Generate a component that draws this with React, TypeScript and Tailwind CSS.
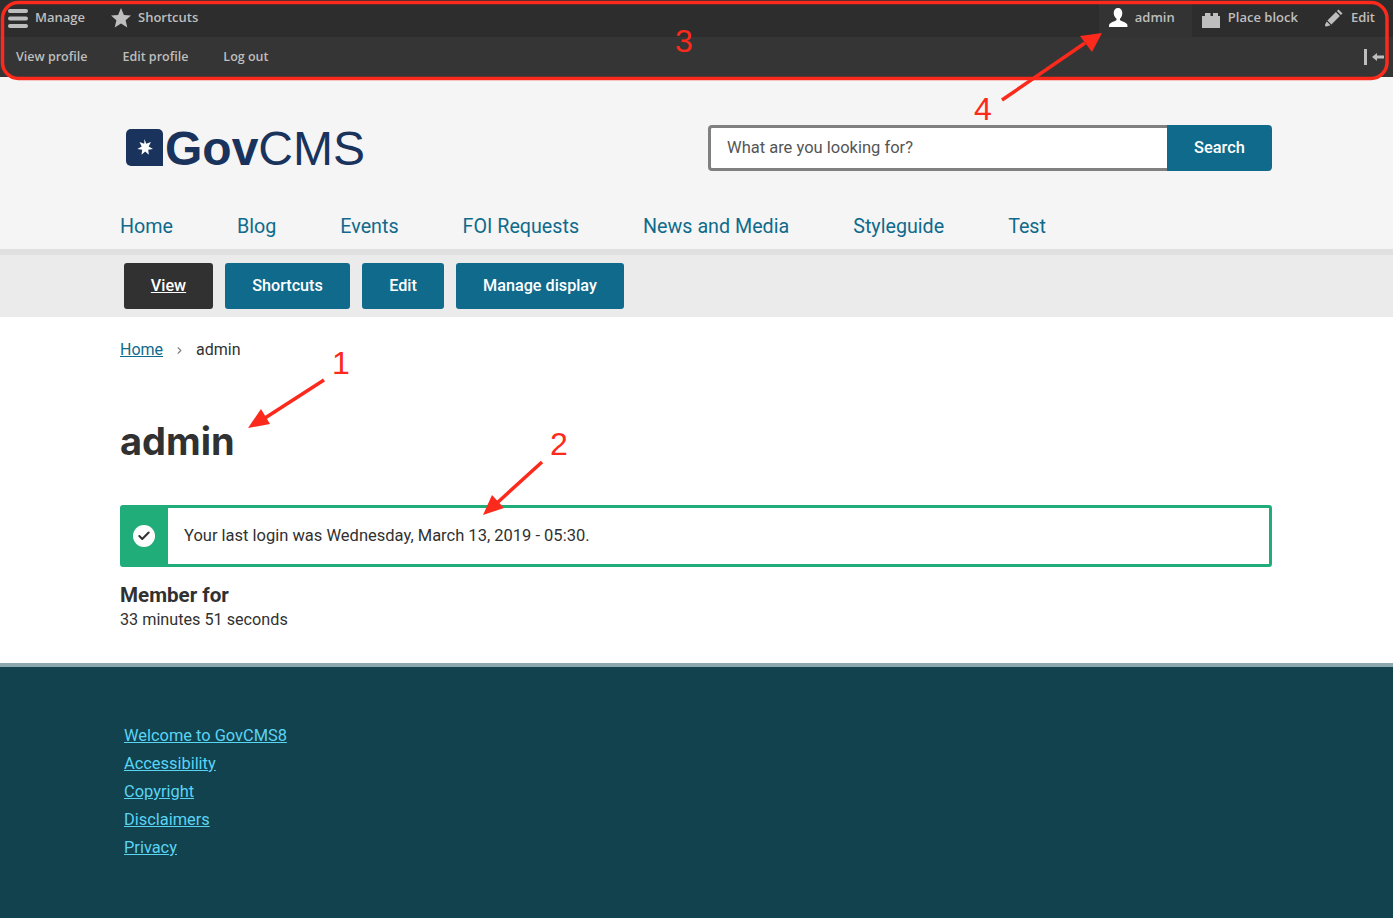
import React from 'react';
import { Check, ChevronRight } from 'lucide-react';

const mainLinks = ['Home', 'Blog', 'Events', 'FOI Requests', 'News and Media', 'Styleguide', 'Test'];
const footerLinks = ['Welcome to GovCMS8', 'Accessibility', 'Copyright', 'Disclaimers', 'Privacy'];
const sans = "font-['Roboto','Inter',sans-serif]";

const BurgerIcon = () => (
    <svg width="20" height="19" viewBox="0 0 20 19" fill="#bebebe">
        <rect x="0" y="0" width="20" height="4" rx="2" />
        <rect x="0" y="7.500" width="20" height="4" rx="2" />
        <rect x="0" y="15" width="20" height="4" rx="2" />
    </svg>
);

const StarIcon = () => (
    <svg width="20" height="20" viewBox="0 0 20 20" fill="#bebebe" className="-translate-y-px">
        <path d="M10 0l2.900 6.900 7.100.6-5.400 4.700 1.700 7.300L10 15.600 3.700 19.500l1.700-7.300L0 7.500l7.100-.6z" />
    </svg>
);

const UserIcon = () => (
    <svg width="20" height="20" viewBox="0 0 20 20" fill="#ffffff">
        <path d="M10 0c2.700 0 4.300 2.100 4.300 4.900 0 2.300-.9 4.400-2.100 5.500-.5.5-.4 1.600.3 2 1.800.9 5.500 2 6.500 3.500.4.600.5 2.100.5 3.100H1c0-1 .1-2.500.5-3.100 1-1.500 4.700-2.600 6.500-3.500.7-.4.800-1.500.3-2C7 9.300 5.700 7.200 5.700 4.900 5.700 2.100 7.300 0 10 0z" />
    </svg>
);

const BlockIcon = () => (
    <svg width="18" height="15" viewBox="0 0 18 15" fill="#bebebe" className="translate-y-[2px]">
        <path d="M0 3h3V0h5.500v3H11V0h5v3h2v12H0z" />
    </svg>
);

const PencilIcon = () => (
    <svg width="18" height="18" viewBox="0 0 18 18" fill="#bebebe">
        <path d="M13.500 0.500l4 4-1.600 1.600-4-4zM10.900 3.100l4 4-8.500 8.500-4-4zM1.700 12.500l3.800 3.800-3.200 1-1.600.200-.700-.700.200-1.600z" />
    </svg>
);

const CollapseIcon = () => (
    <svg width="20" height="16" viewBox="0 0 20 16" fill="#bebebe">
        <rect x="0" y="0" width="3" height="16" />
        <path d="M8 8l5-4v2.500h7v3h-7V12z" />
    </svg>
);

const StarLogo = () => (
    <svg width="37" height="37" viewBox="0 0 37 37">
        <path d="M0 5a5 5 0 0 1 5-5h27a5 5 0 0 1 5 5v32H5a5 5 0 0 1-5-5z" fill="#1a335c" />
        <path d="M18.500 10l1.700 4.700 4.700-1.800-2.200 4.600 4.300 2.500-4.800.8.700 5-3.700-3.300-3.700 3.300.7-5-4.800-.8 4.300-2.500-2.200-4.600 4.700 1.800z" fill="#ffffff" />
    </svg>
);

const Annotations = () => (
    <svg className="absolute left-0 top-0 pointer-events-none" width="1393" height="918" viewBox="0 0 1393 918" fill="none">
        <rect x="2.500" y="2.500" width="1384.500" height="76" rx="16" stroke="#fc2a1c" strokeWidth="3.500" />
        <path d="M1002 100L1085 43" stroke="#fc2a1c" strokeWidth="3.500" />
        <path d="M1102 33L1092 52L1080 36z" fill="#fc2a1c" />
        <path d="M324 380L265 418" stroke="#fc2a1c" strokeWidth="3.500" />
        <path d="M248 428L261 409L270 424z" fill="#fc2a1c" />
        <path d="M542 462L497 503" stroke="#fc2a1c" strokeWidth="3.500" />
        <path d="M483 515L492 495L504 508z" fill="#fc2a1c" />
    </svg>
);

const AnnotationLabel = ({ children, className }: { children: React.ReactNode; className: string }) => (
    <span className={`absolute font-['Liberation_Sans',sans-serif] text-[32px] leading-none text-[#fc2a1c] ${className}`}>{children}</span>
);

const App = () => {
    return (
        <div className={`relative min-h-[918px] overflow-hidden bg-white text-[#313131] ${sans}`}>
            {/* Admin toolbar */}
            <div className="bg-[#353535] font-['Open_Sans',sans-serif] text-[13px] font-semibold text-[#bebebe]">
                <div className="flex h-[37px] items-center justify-between bg-[#2d2d2d]">
                    <div className="flex items-center">
                        <a className="flex items-center gap-[7px] pl-[8px]"><BurgerIcon /><span className="-translate-y-px">Manage</span></a>
                        <a className="ml-[26px] flex items-center gap-[7px]"><StarIcon /><span className="-translate-y-px">Shortcuts</span></a>
                    </div>
                    <div className="flex h-full items-center">
                        <a className="flex h-full w-[93px] items-center gap-[7px] bg-[#333333] pb-px pl-[9px]"><UserIcon />admin</a>
                        <a className="ml-[10px] flex items-center gap-[8px] pb-px"><BlockIcon />Place block</a>
                        <a className="ml-[27px] mr-[18px] flex items-center gap-[8px] pb-px"><PencilIcon />Edit</a>
                    </div>
                </div>
                <div className="flex h-[40px] items-center justify-between pl-[16px] pr-[9px] text-[12.500px]">
                    <div className="flex gap-[35px]">
                        <a>View profile</a>
                        <a>Edit profile</a>
                        <a>Log out</a>
                    </div>
                    <CollapseIcon />
                </div>
            </div>

            {/* Header */}
            <header className="bg-[#f5f5f5]">
                <div className="flex h-[126px] items-center justify-between pl-[126px] pr-[121px] pt-[14px]">
                    <div className="flex items-center gap-[2px] font-['Liberation_Sans',sans-serif] text-[48px] leading-none text-[#1a335c]">
                        <StarLogo />
                        <span className="translate-y-[2px]"><span className="font-bold">Gov</span>CMS</span>
                    </div>
                    <div className="flex h-[46px] w-[564px] translate-y-px">
                        <div className="flex flex-1 items-center rounded-l-[4px] border-[3px] border-r-0 border-[#808080] bg-white pl-[16px] text-[16.500px] text-[#555555]">What are you looking for?</div>
                        <button className="w-[105px] rounded-r-[4px] bg-[#0f6a8c] text-[16.400px] font-medium text-white">Search</button>
                    </div>
                </div>
                <nav className="flex h-[46px] gap-[64px] pl-[120px] pt-[9px] text-[19.700px] text-[#0f6a8c]">
                    {mainLinks.map((link) => (
                        <a key={link}>{link}</a>
                    ))}
                </nav>
            </header>

            {/* Tabs */}
            <div className="flex h-[68px] gap-[12px] border-t-[6px] border-[#e0e0e0] bg-[#ebebeb] pl-[124px] pt-[8px] text-[16.200px] font-medium text-white">
                <a className="flex h-[46px] w-[89px] items-center justify-center rounded-[3px] bg-[#313131] pt-px underline">View</a>
                <a className="flex h-[46px] w-[125px] items-center justify-center rounded-[3px] bg-[#0f6a8c] pt-px">Shortcuts</a>
                <a className="flex h-[46px] w-[82px] items-center justify-center rounded-[3px] bg-[#0f6a8c] pt-px">Edit</a>
                <a className="flex h-[46px] w-[168px] items-center justify-center rounded-[3px] bg-[#0f6a8c] pt-px">Manage display</a>
            </div>

            {/* Main content */}
            <main className="h-[346px] px-[120px] pt-[22px]">
                <div className="flex items-center text-[16px] leading-[21px]">
                    <a className="text-[#0f6a8c] underline">Home</a>
                    <ChevronRight size={11} strokeWidth={2.500} color="#808080" className="mx-[11px] mt-[2px]" />
                    <span>admin</span>
                </div>
                <h1 className="mt-[53px] font-['Inter',sans-serif] text-[38px] font-bold leading-[56px]">admin</h1>
                <div className="mt-[36px] flex h-[62px] w-[1152px] overflow-hidden rounded-[3px] border-[3px] border-[#20ad79] bg-white">
                    <div className="flex w-[45px] items-center justify-center bg-[#20ad79]">
                        <div className="flex h-[22px] w-[22px] -translate-x-[2px] items-center justify-center rounded-full bg-white">
                            <Check size={14} strokeWidth={3.500} color="#313131" />
                        </div>
                    </div>
                    <p className="flex items-center pl-[16px] pt-px text-[16.500px]">Your last login was Wednesday, March 13, 2019 - 05:30.</p>
                </div>
                <h4 className="mt-[16px] text-[20.600px] font-bold leading-[24px]">Member for</h4>
                <p className="mt-px text-[16.200px] leading-[24px]">33 minutes 51 seconds</p>
            </main>

            {/* Footer */}
            <footer className="h-[255px] border-t-4 border-[#8aa8ad] bg-[#12424d] pl-[124px] pt-[55px]">
                <ul className="flex flex-col text-[16.400px] leading-[28px] text-[#5bd4f4]">
                    {footerLinks.map((link) => (
                        <li key={link}><a className="underline">{link}</a></li>
                    ))}
                </ul>
            </footer>

            <Annotations />
            <AnnotationLabel className="left-[675px] top-[25px]">3</AnnotationLabel>
            <AnnotationLabel className="left-[974px] top-[93px]">4</AnnotationLabel>
            <AnnotationLabel className="left-[332px] top-[347px]">1</AnnotationLabel>
            <AnnotationLabel className="left-[550px] top-[428px]">2</AnnotationLabel>
        </div>
    );
};

export default App;
